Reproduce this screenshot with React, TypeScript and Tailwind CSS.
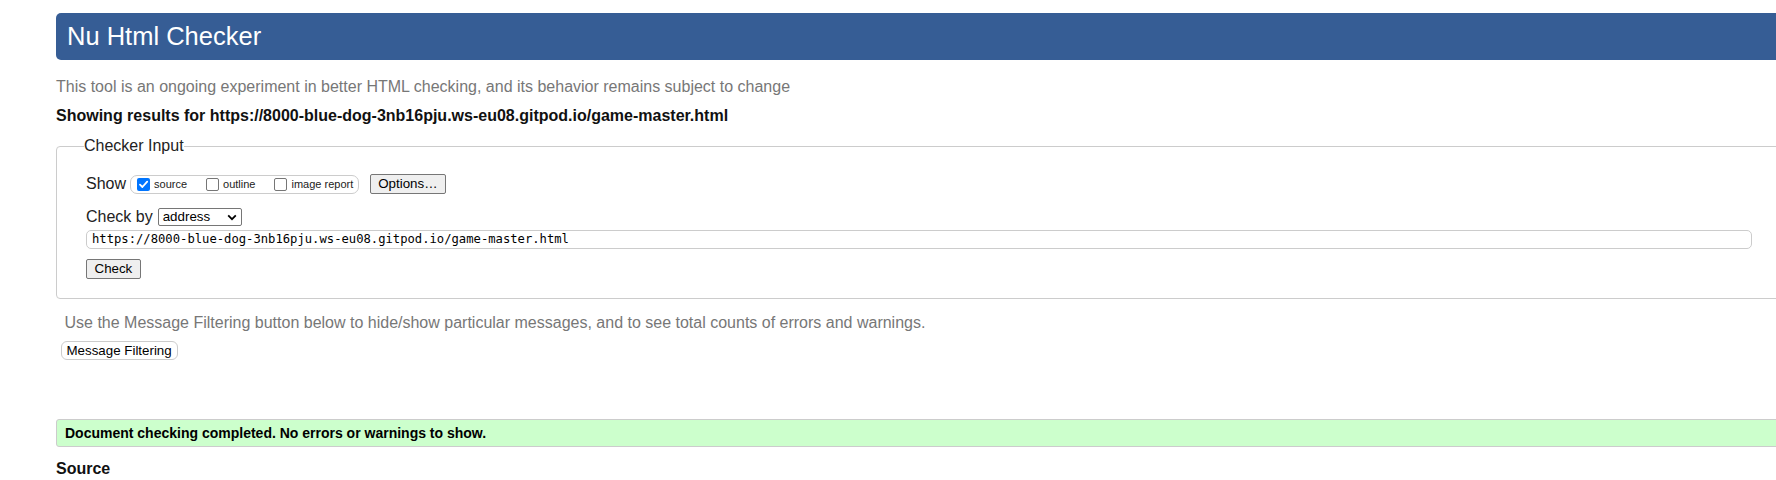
const URL_TEXT = 'https://8000-blue-dog-3nb16pju.ws-eu08.gitpod.io/game-master.html';

function Checkbox({ checked = false }: { checked?: boolean }) {
  if (checked) {
    return (
      <span className="inline-flex items-center justify-center w-[13px] h-[13px] rounded-[2px] bg-[#0075ff]">
        <svg width="11" height="11" viewBox="0 0 11 11">
          <path d="M2 5.6 L4.4 8 L9.2 2.6" fill="none" stroke="#fff" strokeWidth="1.8" strokeLinecap="round" strokeLinejoin="round" />
        </svg>
      </span>
    );
  }
  return <span className="inline-block w-[13px] h-[13px] rounded-[2px] border border-[#767676] bg-white" />;
}

export default function App() {
  return (
    <div className="w-[1776px] h-[480px] overflow-hidden bg-white text-black font-['Liberation_Sans',Arial,sans-serif]">
      <div className="ml-[56px] w-[1760px] pt-[13px]">
        {/* title bar */}
        <h1 className="h-[47px] flex items-center pl-[11px] bg-[#365d95] text-white text-[25.5px] leading-none font-normal rounded-[5px]">
          Nu Html Checker
        </h1>

        <p className="mt-[18px] text-[16px] leading-[18px] text-[#777]">
          This tool is an ongoing experiment in better HTML checking, and its behavior remains subject to change
        </p>
        <h2 className="mt-[11px] text-[16px] leading-[18px] font-bold text-[#111]">
          Showing results for {URL_TEXT}
        </h2>

        {/* checker input */}
        <fieldset className="mt-[12px] border border-[#ccc] rounded-[4px] pl-[29px] pb-[18px]">
          <legend className="-ml-[2px] text-[16px] leading-[18px] text-[#222]">Checker Input</legend>

          <div className="mt-[19px] flex items-center h-[20px]">
            <span className="text-[16px] leading-[18px] text-[#222]">Show</span>
            <div className="ml-[4px] h-[19px] flex items-center border border-[#ccc] rounded-[7px] pl-[6px] pr-[5px] text-[11px] leading-none text-[#222]">
              <Checkbox checked />
              <span className="ml-[4px]">source</span>
              <span className="ml-[19px] flex items-center"><Checkbox /></span>
              <span className="ml-[4px]">outline</span>
              <span className="ml-[19px] flex items-center"><Checkbox /></span>
              <span className="ml-[4px]">image report</span>
            </div>
            <button className="ml-[11px] h-[20px] px-[7px] text-[13.33px] leading-none bg-[#efefef] border border-[#767676] rounded-[2px] text-black">
              Options…
            </button>
          </div>

          <div className="mt-[14px] flex items-center h-[18px]">
            <span className="text-[16px] leading-[18px] text-[#222]">Check by</span>
            <div className="ml-[5px] w-[84px] h-[18px] flex items-center justify-between border border-[#767676] rounded-[2px] bg-white pl-[4px] pr-[4px] text-[13.33px] leading-none">
              <span>address</span>
              <svg width="10" height="7" viewBox="0 0 10 7">
                <path d="M1.2 1.4 L5 5.2 L8.8 1.4" fill="none" stroke="#000" strokeWidth="1.8" />
              </svg>
            </div>
          </div>

          <div className="mt-[4px] w-[1666px] h-[19px] flex items-center border border-[#ccc] rounded-[5px] pl-[5px] font-['DejaVu_Sans_Mono',monospace] text-[12.2px] leading-none">
            {URL_TEXT}
          </div>

          <button className="mt-[10px] h-[20px] px-[7.5px] text-[13.33px] leading-none bg-[#efefef] border border-[#767676] rounded-[2px] text-black">
            Check
          </button>
        </fieldset>

        <p className="mt-[15px] pl-[8.5px] text-[16px] leading-[18px] text-[#777]">
          Use the Message Filtering button below to hide/show particular messages, and to see total counts of errors and warnings.
        </p>
        <button className="mt-[9px] ml-[4.5px] h-[19px] px-[5px] text-[13.33px] leading-none bg-white border border-[#ccc] rounded-[6px] text-black">
          Message Filtering
        </button>

        <div className="mt-[57px] h-[28px] flex items-center border border-[#ccc] rounded-[3px] bg-[#ccffcc] pl-[8px] text-[14px] font-bold leading-none">
          Document checking completed. No errors or warnings to show.
        </div>

        <h2 className="mt-[13px] text-[16px] leading-[18px] font-bold text-[#111]">Source</h2>
      </div>
    </div>
  );
}
